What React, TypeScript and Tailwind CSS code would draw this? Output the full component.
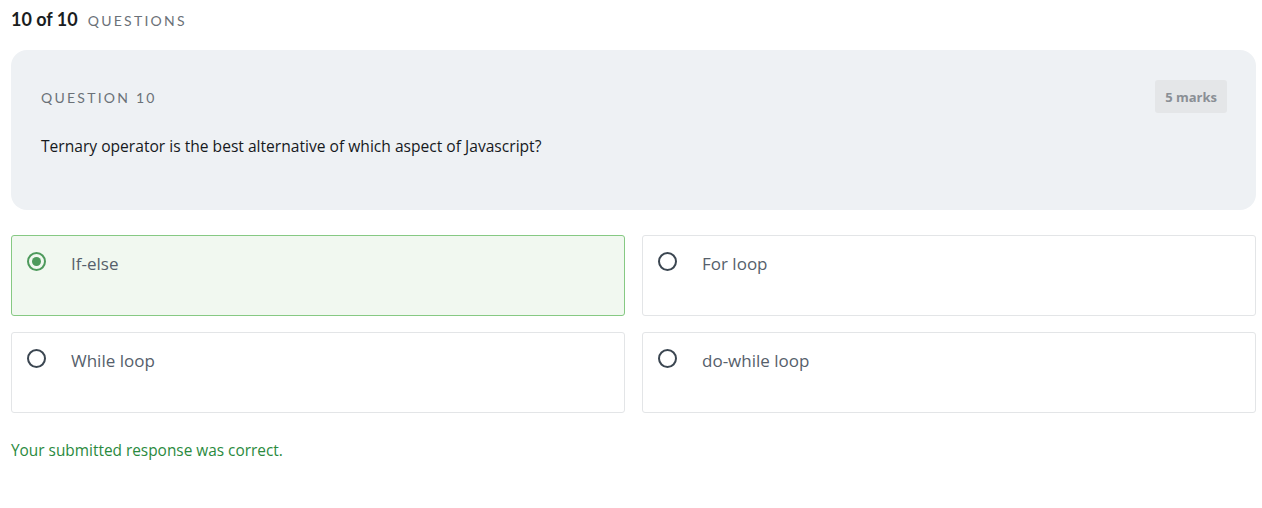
import React from 'react';

const options = [
  { id: 'a', label: 'If-else', selected: true },
  { id: 'b', label: 'For loop', selected: false },
  { id: 'c', label: 'While loop', selected: false },
  { id: 'd', label: 'do-while loop', selected: false },
];

function Radio({ checked }: { checked: boolean }) {
  if (checked) {
    return (
      <span className="flex h-[19px] w-[19px] shrink-0 items-center justify-center rounded-full border-2 border-[#4e9a5c]">
        <span className="h-[9px] w-[9px] rounded-full bg-[#4e9a5c]" />
      </span>
    );
  }
  return <span className="block h-[19px] w-[19px] shrink-0 rounded-full border-2 border-[#3b4651]" />;
}

export default function App() {
  return (
    <div className="min-h-screen bg-white pl-[11px] pr-[6px] pt-[6px] font-['Open_Sans',sans-serif]">
      <div className="flex items-baseline gap-[10px]">
        <span className="font-['Lato',sans-serif] text-[18px] font-bold text-[#1a1d21]">10 of 10</span>
        <span className="font-['Lato',sans-serif] text-[14px] tracking-[0.16em] text-[#6b7178]">QUESTIONS</span>
      </div>

      <div className="mt-[17px] flex h-[160px] items-start justify-between rounded-[16px] bg-[#eef1f4] pl-[30px] pr-[29px] pt-[30px]">
        <div>
          <div className="pt-[7px] font-['Lato',sans-serif] text-[14px] tracking-[0.16em] text-[#6b7178]">QUESTION 10</div>
          <div className="mt-[27px] text-[15.6px] text-[#16191d]">
            Ternary operator is the best alternative of which aspect of Javascript?
          </div>
        </div>
        <span className="flex h-[33px] items-center rounded-[3px] bg-[#e4e6e8] px-[10px] pt-[3px] text-[13px] font-bold text-[#8a8f95]">
          5 marks
        </span>
      </div>

      <div className="mt-[25px] grid grid-cols-2 gap-x-[17px] gap-y-[16px]">
        {options.map((o) => (
          <div
            key={o.id}
            className={
              o.selected
                ? 'flex h-[81px] items-start gap-[25px] rounded-[3px] border border-[#86c983] bg-[#f1f8f0] pl-[15px] pt-[16px]'
                : 'flex h-[81px] items-start gap-[25px] rounded-[3px] border border-[#e3e5e7] bg-white pl-[15px] pt-[16px]'
            }
          >
            <Radio checked={o.selected} />
            <span className="-mt-[1px] text-[17px] text-[#56606b]">{o.label}</span>
          </div>
        ))}
      </div>

      <div className="mt-[26px] text-[15.4px] text-[#2a8a3e]">Your submitted response was correct.</div>
    </div>
  );
}
